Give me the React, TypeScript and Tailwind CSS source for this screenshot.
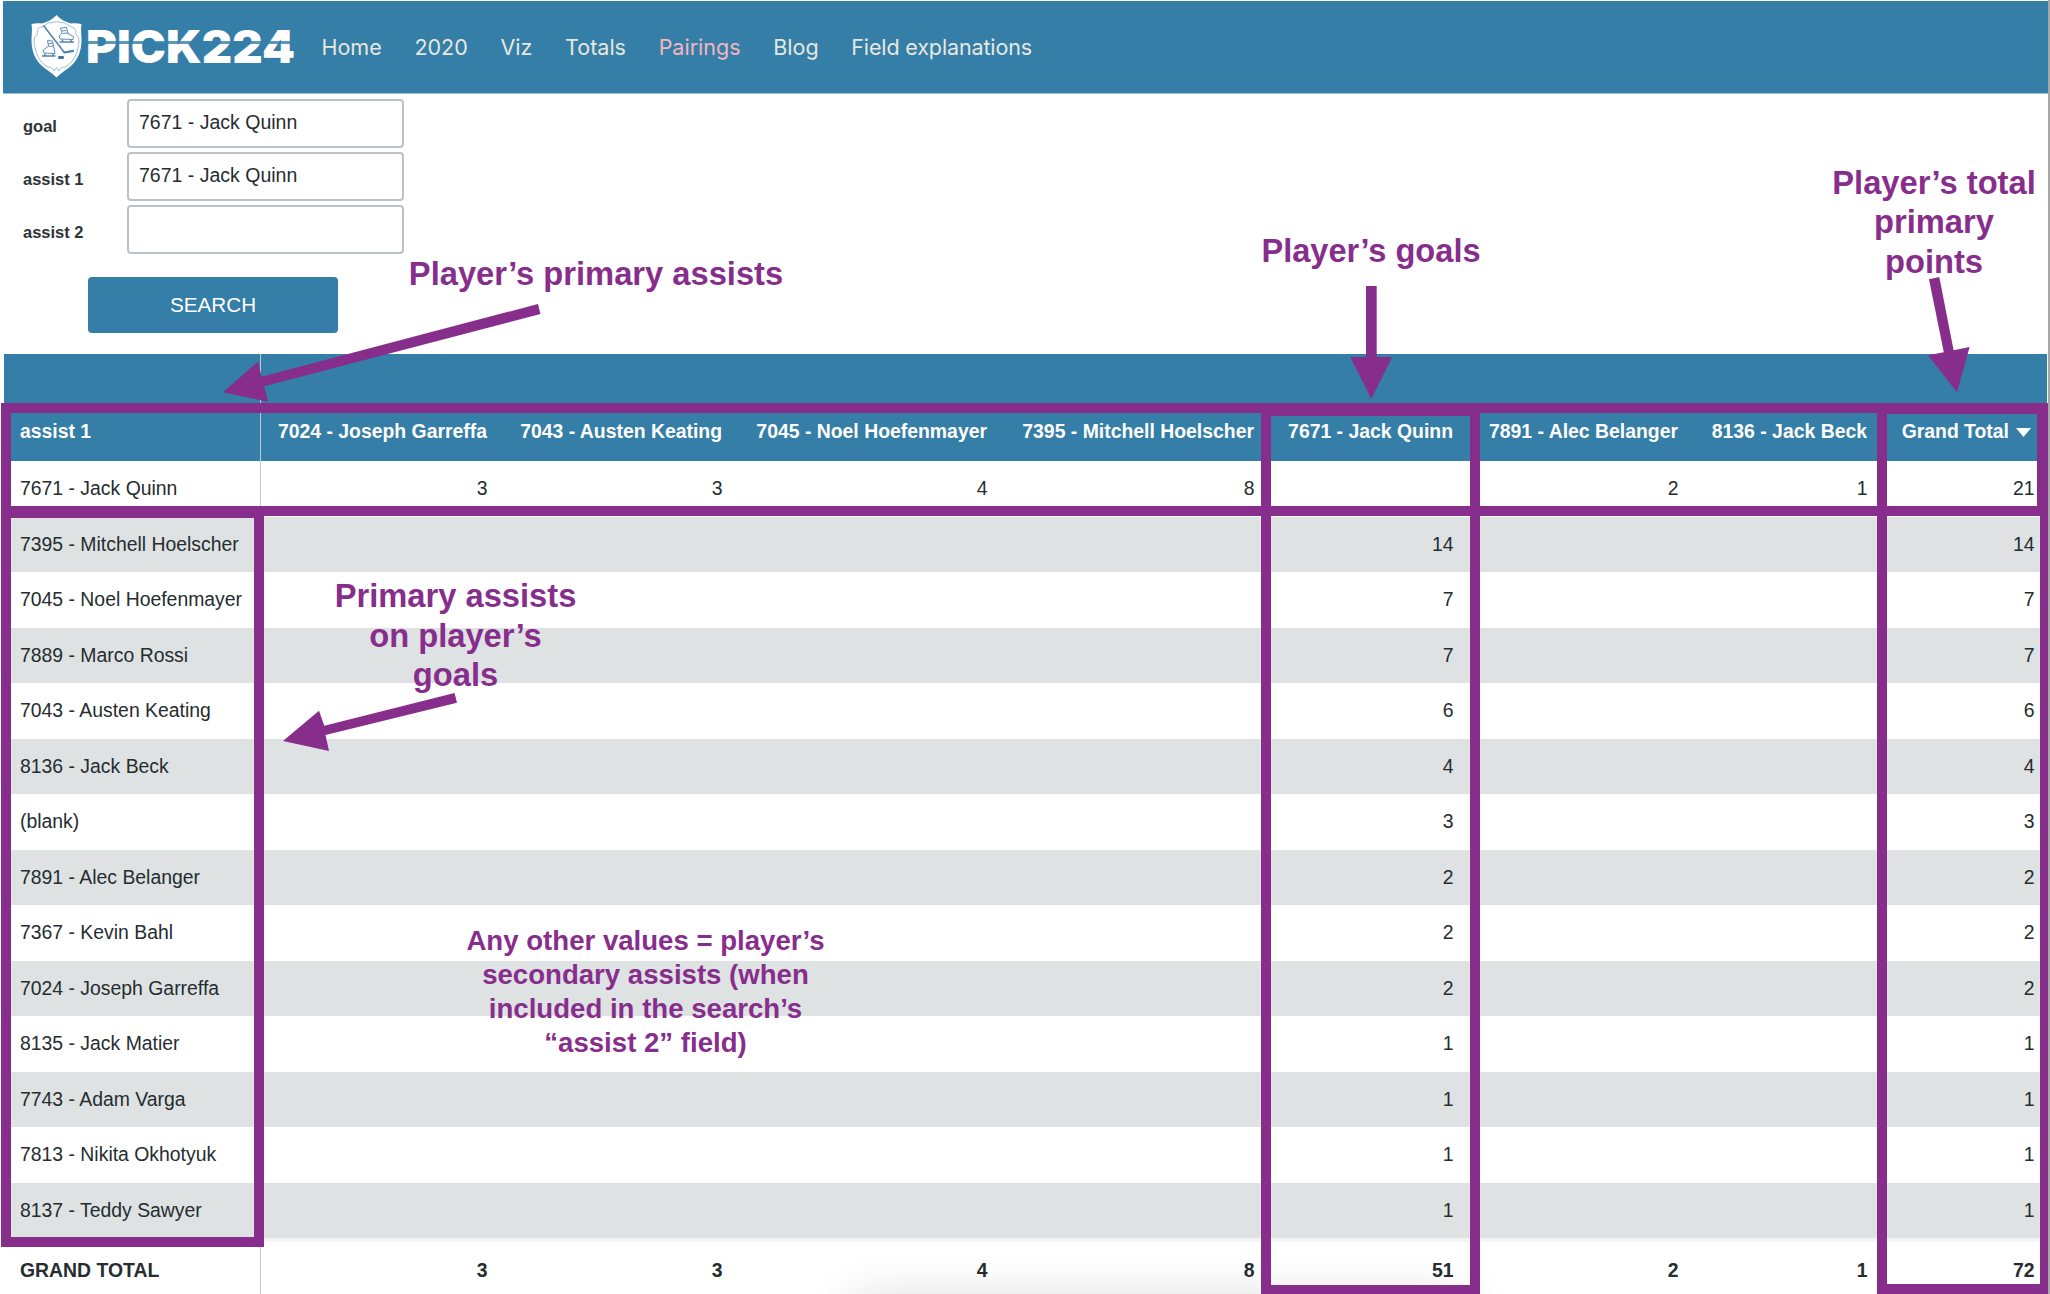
const COLS =
  "grid grid-cols-[257px_243px_235px_265px_267px_199px_225px_189px_163px] text-[19.400px]";

const nav = ["Home", "2020", "Viz", "Totals", "Pairings", "Blog", "Field explanations"];

const fields = [
  { label: "goal", value: "7671 - Jack Quinn" },
  { label: "assist 1", value: "7671 - Jack Quinn" },
  { label: "assist 2", value: "" },
];

const columns = [
  "7024 - Joseph Garreffa",
  "7043 - Austen Keating",
  "7045 - Noel Hoefenmayer",
  "7395 - Mitchell Hoelscher",
  "7671 - Jack Quinn",
  "7891 - Alec Belanger",
  "8136 - Jack Beck",
];

const goalRow = (name: string, n: string) => [name, "", "", "", "", n, "", "", n];

const rows = [
  ["7671 - Jack Quinn", "3", "3", "4", "8", "", "2", "1", "21"],
  goalRow("7395 - Mitchell Hoelscher", "14"),
  goalRow("7045 - Noel Hoefenmayer", "7"),
  goalRow("7889 - Marco Rossi", "7"),
  goalRow("7043 - Austen Keating", "6"),
  goalRow("8136 - Jack Beck", "4"),
  goalRow("(blank)", "3"),
  goalRow("7891 - Alec Belanger", "2"),
  goalRow("7367 - Kevin Bahl", "2"),
  goalRow("7024 - Joseph Garreffa", "2"),
  goalRow("8135 - Jack Matier", "1"),
  goalRow("7743 - Adam Varga", "1"),
  goalRow("7813 - Nikita Okhotyuk", "1"),
  goalRow("8137 - Teddy Sawyer", "1"),
];

const totals = ["GRAND TOTAL", "3", "3", "4", "8", "51", "2", "1", "72"];

function Shield() {
  return (
    <svg viewBox="0 0 51 63" className="h-[63px] w-[51px] shrink-0">
      <path
        d="M25.5 0C22 4 17 7 11 8.5C7.5 8 4 8.2 0.5 9C1.5 14 0.5 19 0.5 25C0.5 37 4.5 44.5 10.5 50.5C15 55 21 57.5 25.5 62.5C30 57.5 36 55 40.5 50.5C46.500 44.5 50.5 37 50.5 25C50.5 19 49.5 14 50.5 9C47 8.200 43.500 8 40 8.5C34 7 29 4 25.5 0Z"
        fill="#fff"
      />
      <path
        d="M25.5 6.5C22.500 7 21 8.500 18 7.500C16.500 8.500 13 11 8 13C5 15 7.500 18 5.500 20C2 23 3 29 4 33C6 41 9 47 16 51.500C19 53 22 52 23 56L25.5 52.500L28 56C29 52 32 53 35 51.500C42 47 45 41 47 33C48 29 49 23 45.500 20C43.500 18 46 15 43 13C38 11 34.500 8.500 33 7.500C30 8.500 28.500 7 25.500 6.500Z"
        fill="none"
        stroke="#8fb4cd"
        strokeWidth="0.9"
      />
      <g fill="none" stroke="#4f83ac" strokeLinejoin="round">
        <path d="M12.500 10.500L31.500 35L33 37.500L43 35.500" strokeWidth="1.5" />
        <path d="M33 37.500L42.500 36" strokeWidth="2.2" />
        <path d="M16.500 25.500L17.500 31L12 35.500L13 38L24 38.500L23 33L21.500 26ZM17 29L22 28M17.500 31.500L22.500 31" strokeWidth="0.9" />
        <path d="M11 41H24.500M14 38.500V41M22 38.500V41" strokeWidth="1.4" />
        <path d="M29.500 13L31 18L28 21L29 24L42 24.500L42.500 21.500L37 18.500L35.500 12.500ZM31 16L35.500 15.500M31.500 18.500L37 18" strokeWidth="0.9" />
        <path d="M28.500 27H43M31.500 24.500V27M40 24.500V27" strokeWidth="1.4" />
      </g>
      <rect x="27" y="41" width="6" height="3" rx="1.2" fill="#3d76a3" />
    </svg>
  );
}

function Header() {
  return (
    <header className="mx-[3px] mt-px flex h-[93px] w-[2045px] items-start border-b border-[#9cc3da] bg-[#357ea7]">
      <div className="flex pl-[28px] pt-[14px]">
        <Shield />
        <div className="relative ml-[4px] mt-[16px] h-[33px] w-[209px]">
          <span className="block origin-left scale-x-[1.055] whitespace-nowrap font-['Inter'] text-[44.7px] font-black leading-[33px] text-white">
            PICK224
          </span>
          <i className="absolute left-0 top-[10px] h-[3px] w-full bg-[#357ea7]/80" />
        </div>
      </div>
      <nav className="flex gap-[32.700px] pl-[26.500px] font-['Inter'] text-[21.5px] leading-[93px]">
        {nav.map((n) => (
          <a
            key={n}
            className={
              n === "Pairings"
                ? "text-[#f3b6bf]"
                : n === "Field explanations"
                  ? "tracking-[-0.130px] text-[#e6e8e0]"
                  : "text-[#e6e8e0]"
            }
          >
            {n}
          </a>
        ))}
      </nav>
    </header>
  );
}

function SearchForm() {
  return (
    <form className="flex h-[260px] flex-col pl-[23px] pt-[4.500px]">
      {fields.map((f) => (
        <div key={f.label} className="mb-[4px] flex h-[49px]">
          <label className="w-[104px] pt-[6px] text-[16.5px] font-bold leading-[42px] text-[#2c3437]">{f.label}</label>
          <div className="w-[277px] rounded-[4px] border-2 border-[#b9c2c7] bg-white pl-[10px] text-[19.5px] leading-[43px] text-[#252d30]">
            {f.value}
          </div>
        </div>
      ))}
      <button
        type="button"
        className="ml-[65px] mt-[19px] h-[56px] w-[250px] rounded-[4px] bg-[#357ea7] text-[20.700px] leading-[55px] text-white"
      >
        SEARCH
      </button>
    </form>
  );
}

function Cells({ cells }: { cells: string[] }) {
  return (
    <>
      {cells.map((c, i) => (
        <div
          key={i}
          className={
            i === 0
              ? "border-r-[1.500px] border-[#c4c8ca] pl-[16px]"
              : i === 8
                ? "pr-[12.500px] text-right"
                : "pr-[16.500px] text-right"
          }
        >
          {c}
        </div>
      ))}
    </>
  );
}

function Table() {
  return (
    <section className="ml-[4px] w-[2043px] whitespace-nowrap text-[#252d30]">
      <div className={COLS + " h-[52px] bg-[#357ea7]"}>
        <div className="border-r border-[#c4c8ca]" />
      </div>
      <div className={COLS + " h-[55px] bg-[#357ea7] font-bold leading-[50px] text-white"}>
        <div className="border-r border-[#c4c8ca] pl-[16px]">assist 1</div>
        {columns.map((c) => (
          <div key={c} className="pr-[17px] text-right">
            {c}
          </div>
        ))}
        <div className="flex items-start justify-end pr-[16px]">
          Grand Total
          <svg viewBox="0 0 15 9" className="ml-[7px] mt-[22px] h-[9px] w-[15px]">
            <path d="M0 0H15L7.500 9Z" fill="#fff" />
          </svg>
        </div>
      </div>
      {rows.map((r, i) => (
        <div key={i} className={COLS + " h-[55.5px] leading-[54.5px] " + (i % 2 ? "bg-[#dee2e3]" : "bg-white")}>
          <Cells cells={r} />
        </div>
      ))}
      <div className={COLS + " h-[58px] border-t-4 border-[#f3f4f4] font-bold leading-[57px]"}>
        <Cells cells={totals} />
      </div>
    </section>
  );
}

function Note({ className, lines }: { className: string; lines: string[] }) {
  return (
    <div className={"absolute -translate-x-1/2 whitespace-nowrap text-center font-bold " + className}>
      {lines.map((l) => (
        <p key={l}>{l}</p>
      ))}
    </div>
  );
}

function Annotations() {
  return (
    <div className="pointer-events-none absolute inset-0 text-[#872e8c]">
      <div className="absolute left-[1px] top-[403px] h-[113px] w-[2047px] border-[10px] border-r-[11px] border-[#872e8c]" />
      <div className="absolute left-[1px] top-[508px] h-[739px] w-[263px] border-[10px] border-[#872e8c]" />
      <div className="absolute left-[1261px] top-[406px] h-[889px] w-[219px] border-[10px] border-[#872e8c]" />
      <div className="absolute left-[1877px] top-[404px] h-[890px] w-[171px] border-[10px] border-r-[8px] border-[#872e8c]" />

      <svg viewBox="0 0 2050 1294" className="absolute inset-0 h-full w-full" fill="#872e8c">
        <path d="M538 304L540.500 314L264.300 386.300L268 401.700L222.800 392.300L258 361.700L261.600 376.700Z" />
        <path d="M1366 286H1376.700V357H1392.300L1371.300 399L1350.300 357H1366Z" />
        <path d="M1929 279.300L1939.300 277L1953.600 350.300L1969.600 347L1957 392.300L1928 355.300L1943.800 352.300Z" />
        <path d="M454.500 693L457 702.700L325.500 735L329 751L283 741L319 710.700L324.300 725.700Z" />
      </svg>

      <Note className="left-[596px] top-[254px] text-[32.700px] leading-[39.5px]" lines={["Player’s primary assists"]} />
      <Note className="left-[1371px] top-[231px] text-[32.600px] leading-[39.5px]" lines={["Player’s goals"]} />
      <Note
        className="left-[1934px] top-[162.500px] text-[32.700px] leading-[39.5px]"
        lines={["Player’s total", "primary", "points"]}
      />
      <Note
        className="left-[455.500px] top-[576px] text-[32.700px] leading-[39.5px]"
        lines={["Primary assists", "on player’s", "goals"]}
      />
      <Note
        className="left-[645.500px] top-[923.500px] text-[27.600px] leading-[34px]"
        lines={["Any other values = player’s", "secondary assists (when", "included in the search’s", "“assist 2” field)"]}
      />
    </div>
  );
}

export default function App() {
  return (
    <div className="relative h-[1294px] w-[2050px] overflow-hidden bg-white font-['Liberation_Sans',Arial,sans-serif]">
      <Header />
      <SearchForm />
      <Table />
      <div className="absolute left-[850px] top-[1298px] h-[60px] w-[620px] rounded-[20px] shadow-[0_0_50px_rgba(0,0,0,0.14)]" />
      <div className="absolute right-0 top-0 h-full w-[2px] bg-[#a8a8a8]" />
      <Annotations />
    </div>
  );
}
